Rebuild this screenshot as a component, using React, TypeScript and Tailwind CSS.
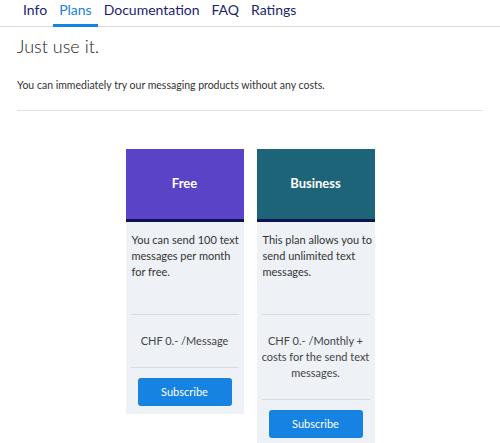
const tabs = ["Info", "Plans", "Documentation", "FAQ", "Ratings"];

const plans = [
  {
    name: "Free",
    header: "bg-[#5a43c6]",
    description: "You can send 100 text messages per month for free.",
    price: "CHF 0.- /Message",
  },
  {
    name: "Business",
    header: "bg-[#1e6479]",
    description: "This plan allows you to send unlimited text messages.",
    price: "CHF 0.- /Monthly + costs for the send text messages.",
  },
];

const App = () => {
  return (
    <div className="w-[500px] h-[443px] overflow-hidden bg-white font-['Lato',sans-serif] text-[#333]">
      {/* Tabs */}
      <nav className="flex h-[27px] border-b border-[#dcdcdc] pl-[17px]">
        {tabs.map((tab) => (
          <div
            key={tab}
            className={
              tab === "Plans"
                ? "px-[6px] h-[27px] border-b-[3px] border-[#1781e3] text-[14px] leading-[20px] text-[#1781e3]"
                : "px-[6px] h-[27px] text-[14px] leading-[20px] text-[#1a2470]"
            }
          >
            {tab}
          </div>
        ))}
      </nav>

      <div className="px-[17px]">
        <h1 className="mt-[6px] text-[18px] leading-[26px] font-light text-[#222]">
          Just use it.
        </h1>
        <p className="mt-[18px] text-[10.5px] leading-[16px] text-[#333]">
          You can immediately try our messaging products without any costs.
        </p>
        <div className="mt-[17px] border-t border-[#e2e2e2]" />
      </div>

      {/* Plans */}
      <div className="mt-[38px] flex justify-center items-start gap-[13px]">
        {plans.map((plan) => (
          <div key={plan.name} className="w-[118px] bg-[#eef1f6]">
            <div
              className={`${plan.header} h-[73px] border-b-[3px] border-[#0b1450] flex items-center justify-center text-white font-bold text-[13px]`}
            >
              {plan.name}
            </div>
            <p className="h-[92px] pl-[6px] pr-[1px] pt-[10px] text-[11px] leading-[16px] text-[#333]">
              {plan.description}
            </p>
            <div className="mx-[5px] border-t border-[#d8dce2] py-[18px] text-center text-[11px] leading-[16px] text-[#444]">
              {plan.price}
            </div>
            <div className="mx-[5px] border-t border-[#d8dce2] pt-[10px] pb-[8px] flex justify-center">
              <button className="w-[94px] h-[28px] rounded-[3px] bg-[#1682e2] text-white text-[11px]">
                Subscribe
              </button>
            </div>
          </div>
        ))}
      </div>
    </div>
  );
};

export default App;
